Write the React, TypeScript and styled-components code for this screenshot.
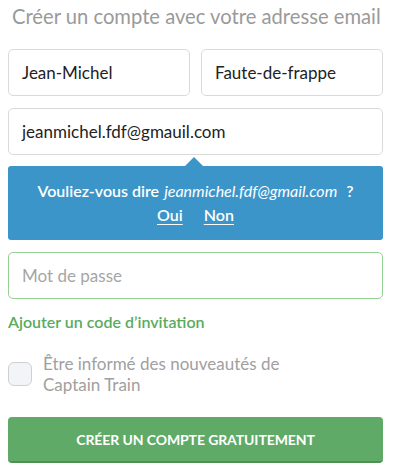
import React from "react";
import styled, { createGlobalStyle } from "styled-components";

const Global = createGlobalStyle`
  html, body { margin: 0; padding: 0; background: #ffffff; }
  body { font-family: Lato, "Open Sans", sans-serif; -webkit-font-smoothing: antialiased; }
  * { box-sizing: border-box; }
`;

const Page = styled.div`
  width: 375px;
  margin-left: 8px;
  display: flex;
  flex-direction: column;
`;

const Title = styled.h1`
  margin: 0;
  padding-left: 4px;
  height: 37px;
  line-height: 32px;
  font-size: 20.2px;
  font-weight: 400;
  color: #9a9a9a;
  white-space: nowrap;
`;

const Row = styled.div`
  display: flex;
  gap: 11px;
  margin-top: 12px;
`;

const Field = styled.div<{ $focus?: boolean; $placeholder?: boolean }>`
  flex: 1;
  height: 47px;
  display: flex;
  align-items: center;
  padding: 0 13px;
  border: 1px solid ${(p) => (p.$focus ? "#94cf94" : "#dadada")};
  border-radius: 5px;
  background: #fff;
  font-size: 17px;
  color: ${(p) => (p.$placeholder ? "#a6a6a6" : "#222")};
`;

const Bubble = styled.div`
  position: relative;
  margin-top: 11px;
  height: 74px;
  background: #3c95c9;
  border-radius: 3px;
  color: #fff;
  display: flex;
  flex-direction: column;
  align-items: center;
  justify-content: center;
  gap: 2px;
  font-size: 16px;
  font-weight: 600;

  &::before {
    content: "";
    position: absolute;
    top: -9px;
    left: 177px;
    border-left: 9px solid transparent;
    border-right: 9px solid transparent;
    border-bottom: 9px solid #3c95c9;
  }
`;

const Line = styled.div`
  display: flex;
  gap: 5px;
  line-height: 22px;
`;

const Suggest = styled.em`
  font-style: italic;
  font-weight: 400;
`;

const Choice = styled.a`
  color: #fff;
  text-decoration: underline;
  text-underline-offset: 3px;
  margin: 0 8px;
  cursor: pointer;
`;

const Invite = styled.div`
  margin-top: 12px;
  line-height: 22px;
  font-size: 16px;
  font-weight: 600;
  color: #5aab5e;
  height: 22px;
`;

const Opt = styled.label`
  margin-top: 20px;
  display: flex;
  align-items: flex-start;
  gap: 11px;
  font-size: 17px;
  color: #a0a0a0;
  line-height: 21px;
`;

const Box = styled.span`
  flex: none;
  margin-top: 9px;
  width: 24px;
  height: 24px;
  border: 1.5px solid #cfd0d6;
  border-radius: 6px;
  background: #f3f4f8;
`;

const Button = styled.button`
  margin-top: 22px;
  height: 46px;
  border: none;
  border-bottom: 2px solid #4e9153;
  border-radius: 4px;
  background: #5faa66;
  color: #fff;
  font-family: Lato, "Open Sans", sans-serif;
  font-size: 14px;
  font-weight: 700;
  letter-spacing: -0.1px;
  cursor: pointer;
`;

export default function App() {
  return (
    <>
      <Global />
      <Page>
        <Title>Créer un compte avec votre adresse email</Title>
        <Row>
          <Field>Jean-Michel</Field>
          <Field>Faute-de-frappe</Field>
        </Row>
        <Row>
          <Field>jeanmichel.fdf@gmauil.com</Field>
        </Row>
        <Bubble>
          <Line>
            <span>Vouliez-vous dire</span>
            <Suggest>jeanmichel.fdf@gmail.com</Suggest>
            <span>&nbsp;?</span>
          </Line>
          <Line>
            <Choice>Oui</Choice>
            <Choice>Non</Choice>
          </Line>
        </Bubble>
        <Row>
          <Field $focus $placeholder>Mot de passe</Field>
        </Row>
        <Invite>Ajouter un code d’invitation</Invite>
        <Opt>
          <Box />
          <span>
            Être informé des nouveautés de
            <br />
            Captain Train
          </span>
        </Opt>
        <Button>CRÉER UN COMPTE GRATUITEMENT</Button>
      </Page>
    </>
  );
}
